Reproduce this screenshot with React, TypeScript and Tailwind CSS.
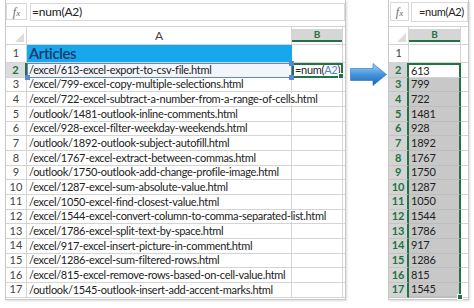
import React from "react";

const urls = [
  "/excel/613-excel-export-to-csv-file.html",
  "/excel/799-excel-copy-multiple-selections.html",
  "/excel/722-excel-subtract-a-number-from-a-range-of-cells.html",
  "/outlook/1481-outlook-inline-comments.html",
  "/excel/928-excel-filter-weekday-weekends.html",
  "/outlook/1892-outlook-subject-autofill.html",
  "/excel/1767-excel-extract-between-commas.html",
  "/outlook/1750-outlook-add-change-profile-image.html",
  "/excel/1287-excel-sum-absolute-value.html",
  "/excel/1050-excel-find-closest-value.html",
  "/excel/1544-excel-convert-column-to-comma-separated-list.html",
  "/excel/1786-excel-split-text-by-space.html",
  "/excel/917-excel-insert-picture-in-comment.html",
  "/excel/1286-excel-sum-filtered-rows.html",
  "/excel/815-excel-remove-rows-based-on-cell-value.html",
  "/outlook/1545-outlook-insert-add-accent-marks.html",
];
const nums = ["613", "799", "722", "1481", "928", "1892", "1767", "1750", "1287", "1050", "1544", "1786", "917", "1286", "815", "1545"];

const font = { fontFamily: "Lato, 'Open Sans', sans-serif" };

function Fx() {
  return (
    <span className="italic text-[#6b6b6b] text-[12px]" style={{ fontFamily: "'Liberation Serif', serif" }}>
      f<span className="text-[9px]">x</span>
    </span>
  );
}

function Corner() {
  return (
    <div className="relative border-r border-b border-[#d4d4d4] bg-white">
      <div className="absolute right-[2px] bottom-[2px] w-0 h-0 border-l-[9px] border-l-transparent border-b-[9px] border-b-[#dcdcdc]" />
    </div>
  );
}

function LeftPanel() {
  return (
    <div className="w-[341px] h-[300px] flex flex-col border border-t-0 border-[#c8c8c8] shadow-[1px_1px_2px_rgba(0,0,0,0.15)] bg-white">
      <div className="h-[27px] flex items-start pt-[3px] gap-[3px] border-b border-[#d4d4d4]">
        <div className="w-[21px] h-[17px] border border-[#d9d9d9] flex items-center justify-center"><Fx /></div>
        <div className="flex-1 h-[18px] border border-[#d9d9d9] flex items-center pl-[1px] text-[12px] tracking-[-0.2px] text-[#222]">=num(A2)</div>
      </div>
      <div className="grid grid-cols-[21px_265px_51px_1fr] grid-rows-[18px_18px_repeat(16,14.67px)] text-[11px] tracking-[-0.3px] text-[#222]">
        <Corner />
        <div className="border-r border-b border-[#d4d4d4] flex items-center justify-center text-[12px] text-[#444]">A</div>
        <div className="border-r border-[#d4d4d4] pt-[2px] border-b border-b-[#d4d4d4]">
          <div className="h-[13px] bg-[#d6d6d6] border-b-2 border-[#217346] flex items-center justify-center text-[10px] font-bold text-[#217346]">B</div>
        </div>
        <div className="border-b border-[#d4d4d4]" />

        <div className="border-r border-b border-[#d4d4d4] flex items-end justify-center text-[#444] text-[11px] pb-[1px] tracking-normal">1</div>
        <div className="bg-[#16a7ec] border-b border-[#d4d4d4] flex items-end pl-[2px]">
          <span className="text-[15px] leading-[17px] tracking-[-0.4px] text-[#1a3a6a] font-semibold">Articles</span>
        </div>
        <div className="border-r border-b border-[#d4d4d4]" />
        <div className="border-b border-[#d4d4d4]" />

        {urls.map((u, i) => {
          const row = i + 2;
          const active = row === 2;
          return (
            <React.Fragment key={row}>
              <div
                className={
                  active
                    ? "bg-[#dcdcdc] border-r-2 border-r-[#217346] border-b border-b-[#d4d4d4] flex items-center justify-center font-bold text-[#217346] text-[11px] tracking-normal"
                    : "border-r border-b border-[#d4d4d4] flex items-center justify-center text-[#444] text-[11px] tracking-normal"
                }
              >
                {row}
              </div>
              <div
                className={
                  active
                    ? "relative bg-[#f2f6fc] border border-[#5b87d6] flex items-center whitespace-nowrap pl-[1px]"
                    : "relative border-r border-b border-[#d4d4d4] flex items-center whitespace-nowrap pl-[2px]"
                }
              >
                <span className={active ? "relative z-10 leading-[12px]" : "relative z-10 bg-white leading-[12px]"}>{u}</span>
                {active && (
                  <>
                    <div className="absolute -right-[3px] -top-[3px] w-[5px] h-[5px] bg-[#5b87d6] z-20" />
                    <div className="absolute -right-[3px] -bottom-[3px] w-[5px] h-[5px] bg-[#5b87d6] z-20" />
                    <div className="absolute -left-[3px] -bottom-[3px] w-[5px] h-[5px] bg-[#5b87d6] z-20" />
                  </>
                )}
              </div>
              <div
                className={
                  active
                    ? "relative border-2 border-[#217346] flex items-center pl-[1px] whitespace-nowrap"
                    : "border-r border-b border-[#d4d4d4]"
                }
              >
                {active && (
                  <>
                    <span>
                      =num(<span className="text-[#4f7fd9]">A2</span>)
                    </span>
                    <div className="absolute -right-[3px] -bottom-[3px] w-[4px] h-[4px] bg-[#217346] border border-white box-content" />
                  </>
                )}
              </div>
              <div className="border-b border-[#d4d4d4]" />
            </React.Fragment>
          );
        })}
      </div>
    </div>
  );
}

function RightPanel() {
  return (
    <div className="w-[81px] h-[300px] flex flex-col border border-t-0 border-[#c8c8c8] shadow-[1px_1px_2px_rgba(0,0,0,0.15)] bg-white">
      <div className="h-[27px] flex items-start pt-[2px] gap-[2px] border-b border-[#d4d4d4] pl-[1px]">
        <div className="w-[19px] h-[19px] border border-[#d9d9d9] flex items-center justify-center"><Fx /></div>
        <div className="flex-1 h-[20px] border border-[#d9d9d9] flex items-center justify-end pr-[3px] text-[11px] tracking-[-0.3px] text-[#222]">=num(A2)</div>
      </div>
      <div className="grid grid-cols-[20px_52px_1fr] grid-rows-[18px_18px_repeat(16,14.67px)] text-[11px] tracking-[-0.2px] text-[#222]">
        <Corner />
        <div className="border-r border-[#d4d4d4] pt-[2px] border-b border-b-[#d4d4d4]">
          <div className="h-[13px] bg-[#d6d6d6] border-b-2 border-[#217346] flex items-center justify-center text-[10px] font-bold text-[#217346]">B</div>
        </div>
        <div className="border-b border-[#d4d4d4]" />

        <div className="border-r border-b border-[#d4d4d4] flex items-end justify-center text-[#444] text-[11px] pb-[1px]">1</div>
        <div className="border-r border-b border-[#d4d4d4]" />
        <div className="border-b border-[#d4d4d4]" />

        {nums.map((n, i) => {
          const row = i + 2;
          const first = row === 2;
          const last = row === 17;
          return (
            <React.Fragment key={row}>
              <div className="bg-[#d4d4d4] border-r-2 border-r-[#217346] border-b border-b-[#c4c4c4] flex items-center justify-center font-bold text-[#217346] text-[11px]">
                {row}
              </div>
              <div
                className={
                  "relative flex items-center pl-[2px] border-r-2 border-r-[#217346] " +
                  (first ? "bg-white border-t-2 border-t-[#217346] border-b border-b-[#d4d4d4] " : "bg-[#c8c8c8] border-b border-b-[#bdbdbd] ") +
                  (last ? "border-b-2 border-b-[#217346]" : "")
                }
              >
                {n}
                {last && <div className="absolute -right-[4px] -bottom-[4px] w-[4px] h-[4px] bg-[#217346] border border-white box-content" />}
              </div>
              <div className="border-b border-[#d4d4d4]" />
            </React.Fragment>
          );
        })}
      </div>
    </div>
  );
}

function Arrow() {
  return (
    <svg width="37" height="23" viewBox="0 0 37 23">
      <defs>
        <linearGradient id="ag" x1="0" y1="0" x2="0" y2="1">
          <stop offset="0" stopColor="#a9d4f5" />
          <stop offset="0.45" stopColor="#4a9be0" />
          <stop offset="1" stopColor="#1d63b4" />
        </linearGradient>
      </defs>
      <path d="M0.5 5.5 H23 V0.5 L36.5 11.5 L23 22.5 V17.5 H0.5 Z" fill="url(#ag)" stroke="#2a6cb6" strokeWidth="0.6" />
    </svg>
  );
}

export default function App() {
  return (
    <div className="w-[474px] h-[308px] bg-white flex overflow-hidden" style={font}>
      <div className="pl-[5px]">
        <LeftPanel />
      </div>
      <div className="pl-[4px] pt-[63px]">
        <Arrow />
      </div>
      <div className="pl-[1px]">
        <RightPanel />
      </div>
    </div>
  );
}
